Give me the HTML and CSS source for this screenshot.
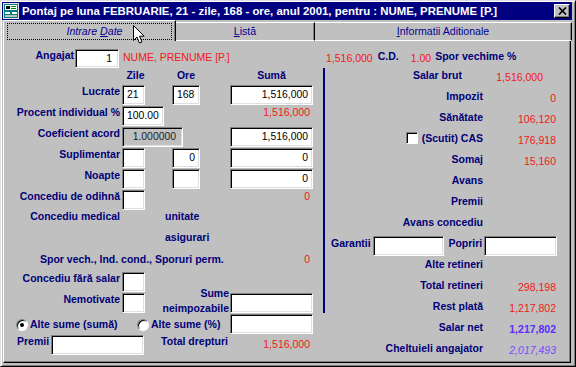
FILE: index.html
```html
<!DOCTYPE html>
<html>
<head>
<meta charset="utf-8">
<title>Pontaj</title>
<link rel="stylesheet" href="styles.css">
</head>
<body>
<div class="window">
  <div class="titlebar">
    <svg class="appicon" width="16" height="16" viewBox="0 0 16 16">
      <rect x="0.5" y="0.5" width="15" height="15" fill="#008080" stroke="#e0e0e0"/>
      <rect x="2" y="2" width="12" height="5" fill="#fff"/>
      <rect x="3" y="3" width="4" height="3" fill="#000"/>
      <rect x="8" y="3" width="5" height="1" fill="#008000"/>
      <rect x="8" y="5" width="5" height="1" fill="#008000"/>
      <rect x="2" y="9" width="5" height="2" fill="#fff"/>
      <rect x="9" y="9" width="5" height="2" fill="#fff"/>
      <rect x="2" y="12" width="12" height="2" fill="#c0c0c0"/>
    </svg>
    <span class="title">Pontaj pe luna FEBRUARIE, 21 - zile, 168 - ore, anul 2001, pentru : NUME, PRENUME [P.]</span>
    <span class="closebtn"><svg width="9" height="8" viewBox="0 0 9 8"><path d="M1 0.5 L8 7.5 M8 0.5 L1 7.5" stroke="#000" stroke-width="1.7"/></svg></span>
  </div>
  <div class="tabs">
    <div class="tab active"><span class="focus">Intrare&nbsp;<u>D</u>ate</span></div>
    <div class="tab t2"><u>L</u>istă</div>
    <div class="tab t3"><u>I</u>nformatii Aditionale</div>
    <svg class="cursor" width="13" height="20" viewBox="0 0 13 20">
      <path d="M0.5 0.5 L0.5 15.5 L4 12 L6.5 18 L9 17 L6.5 11.2 L11.2 11.2 Z" fill="#fff" stroke="#000" stroke-width="1"/>
    </svg>
  </div>
  <div class="panel">
    <div class="toprow">
      <span class="lb ang">Angajat</span>
      <span class="in r ang-in">1</span>
      <span class="red name">NUME, PRENUME [P.]</span>
      <span class="red cdv">1,516,000</span>
      <span class="lb cd">C.D.</span>
      <span class="red cdp">1.00</span>
      <span class="lb sporv">Spor vechime %</span>
    </div>
    <div class="cols">
      <div class="left">
        <span class="lb hdr c2 zile">Zile</span>
        <span class="lb hdr c4">Ore</span>
        <span class="lb hdr c6">Sumă</span>

        <span class="lb lab">Lucrate</span>
        <span class="in c2">21</span>
        <span class="in c4">168</span>
        <span class="in r c6">1,516,000</span>

        <span class="lb lab">Procent individual %</span>
        <span class="in c24">100.00</span>
        <span class="red val6">1,516,000</span>

        <span class="lb lab">Coeficient acord</span>
        <span class="in r dis c25">1.000000</span>
        <span class="in r c6">1,516,000</span>

        <span class="lb lab">Suplimentar</span>
        <span class="in c2"></span>
        <span class="in r c4">0</span>
        <span class="in r c6">0</span>

        <span class="lb lab">Noapte</span>
        <span class="in c2"></span>
        <span class="in c4"></span>
        <span class="in r c6">0</span>

        <span class="lb lab">Concediu de odihnă</span>
        <span class="in c2"></span>
        <span class="red val6">0</span>

        <span class="lb lab mid">Concediu medical</span>
        <span class="lb unit">unitate</span>

        <span class="lb unit">asigurari</span>

        <span class="lb sporl">Spor vech., Ind. cond., Sporuri perm.</span>
        <span class="red val6">0</span>

        <span class="lb lab">Concediu fără salar</span>
        <span class="in c2"></span>
        <span class="lb sume">Sume<br>neimpozabile</span>

        <span class="lb lab">Nemotivate</span>
        <span class="in c2"></span>
        <span class="in c6"></span>

        <span class="radios">
          <span class="rgroup"><span class="radio on"></span><span class="lb">Alte sume (sumă)</span></span>
          <span class="rgroup"><span class="radio"></span><span class="lb">Alte sume (%)</span></span>
        </span>
        <span class="in c6"></span>

        <span class="premii"><span class="lb">Premii</span><span class="in premii-in"></span></span>
        <span class="lb total">Total drepturi</span>
        <span class="red val6 totv">1,516,000</span>
      </div>
      <div class="divider"></div>
      <div class="right">
        <span class="lb rl brut">Salar brut</span>
        <span class="red rv brutv">1,516,000</span>

        <span class="lb rl">Impozit</span>
        <span class="red rv">0</span>

        <span class="lb rl">Sănătate</span>
        <span class="red rv">106,120</span>

        <span class="lb rl"><span class="chk"></span>(Scutit) CAS</span>
        <span class="red rv">176,918</span>

        <span class="lb rl">Somaj</span>
        <span class="red rv">15,160</span>

        <span class="lb rl">Avans</span>
        <span class="lb rl">Premii</span>
        <span class="lb rl">Avans concediu</span>

        <span class="garant">
          <span class="lb">Garantii</span><span class="in g-in"></span>
          <span class="lb pop">Popriri</span><span class="in p-in"></span>
        </span>

        <span class="lb rl">Alte retineri</span>

        <span class="lb rl">Total retineri</span>
        <span class="red rv">298,198</span>

        <span class="lb rl">Rest plată</span>
        <span class="red rv">1,217,802</span>

        <span class="lb rl">Salar net</span>
        <span class="rv net">1,217,802</span>

        <span class="lb rl">Cheltuieli angajator</span>
        <span class="rv chelt">2,017,493</span>
      </div>
    </div>
  </div>
</div>
</body>
</html>
```

FILE: styles.css
```css
html, body {
  margin: 0;
  padding: 0;
  background: #c0c0c0;
}
body {
  width: 576px;
  height: 367px;
  overflow: hidden;
  font-family: "Liberation Sans", Arial, sans-serif;
  font-size: 10.5px;
  line-height: 13px;
  color: #000;
}
.window {
  box-sizing: border-box;
  width: 576px;
  height: 367px;
  border: 1px solid;
  border-color: #dfdfdf #000 #000 #dfdfdf;
  box-shadow: inset 1px 1px #fff, inset -1px -1px #808080;
  padding: 1px 3px 3px 1px;
  display: flex;
  flex-direction: column;
  background: #c0c0c0;
}
.titlebar {
  flex: none;
  height: 18px;
  background: #000080;
  color: #fff;
  display: flex;
  align-items: center;
}
.appicon {
  flex: none;
  margin-left: 1px;
}
.title {
  margin-left: 3px;
  font-weight: bold;
  font-size: 11.4px;
  white-space: nowrap;
}
.closebtn {
  margin-left: auto;
  margin-right: 2px;
  box-sizing: border-box;
  width: 16px;
  height: 14px;
  background: #c0c0c0;
  border: 1px solid;
  border-color: #fff #000 #000 #fff;
  box-shadow: inset -1px -1px #808080;
  display: flex;
  align-items: center;
  justify-content: center;
}
.tabs {
  flex: none;
  position: relative;
  height: 21px;
  display: flex;
  padding-left: 1px;
}
.tab {
  box-sizing: border-box;
  display: flex;
  align-items: center;
  justify-content: center;
  color: #000090;
  font-size: 10.6px;
  background: #c0c0c0;
  white-space: nowrap;
}
.tab.active {
  width: 173px;
  height: 21px;
  border-top: 1px solid #fff;
  border-left: 1px solid #fff;
  border-right: 1px solid #000;
  border-top-left-radius: 2px;
  box-shadow: inset -1px 0 #808080;
  padding: 2px 3px 1px 3px;
}
.focus {
  flex: 1;
  align-self: stretch;
  border: 1px dotted #000;
  display: flex;
  align-items: center;
  justify-content: center;
  font-style: italic;
  padding-left: 10px;
}
.tab.t2, .tab.t3 {
  height: 19px;
  margin-top: 2px;
  border-top: 1px solid #fff;
  border-right: 1px solid #000;
  border-bottom: 1px solid #fff;
  box-shadow: inset -1px 0 #808080;
}
.tab.t2 {
  width: 139px;
}
.tab.t3 {
  flex: 1;
}
.cursor {
  position: absolute;
  left: 131px;
  top: 5px;
}
.panel {
  flex: 1;
  margin: 0 1px;
  border-left: 1px solid #fff;
  border-right: 1px solid #000;
  border-bottom: 1px solid #000;
  box-shadow: inset -1px -1px #808080;
  padding-top: 8px;
}

.lb {
  font-weight: bold;
  color: #000078;
  white-space: nowrap;
}
.red {
  color: #f01818;
  white-space: nowrap;
}
.in {
  box-sizing: border-box;
  height: 20px;
  background: #fff;
  border: 1px solid;
  border-color: #808080 #fff #fff #808080;
  box-shadow: inset 1px 1px #000, inset -1px -1px #dfdfdf;
  font-size: 10.4px;
  line-height: 18px;
  padding: 0 4px;
  white-space: nowrap;
  color: #000;
}
.in.r {
  text-align: right;
}
.in.dis {
  background: #c0c0c0;
  color: #202020;
  padding-right: 6px;
}

/* top row */
.toprow {
  display: flex;
  align-items: flex-start;
  height: 16px;
}
.ang {
  width: 70px;
  text-align: right;
}
.ang-in {
  width: 44px;
  height: 19px;
  margin-left: 1px;
  padding-right: 6px;
}
.name {
  margin-left: 4px;
  width: 203px;
  padding-top: 2px;
}
.cdv {
  padding-top: 3px;
}
.cd {
  margin-left: 5px;
  padding-top: 1px;
}
.cdp {
  margin-left: 12px;
  padding-top: 3px;
}
.sporv {
  margin-left: 4px;
  padding-top: 1px;
}

.cols {
  display: flex;
  align-items: flex-start;
}
.divider {
  flex: none;
  width: 2px;
  height: 245px;
  margin-top: 3px;
  background: #000080;
}

/* left column */
.left {
  flex: none;
  box-sizing: border-box;
  width: 319px;
  padding-top: 3px;
  display: grid;
  grid-template-columns: 118px 23px 27px 28px 30px 83px;
  grid-template-rows: 17px repeat(6, 21px) 11px 31px 19px repeat(4, 21px);
  align-items: start;
}
.lab {
  grid-column: 1;
  text-align: right;
  padding-right: 2px;
}
.c2 { grid-column: 2; }
.c4 { grid-column: 4; }
.c6 { grid-column: 6; }
.c24 {
  grid-column: 2 / 4;
  width: 42px;
}
.c25 {
  grid-column: 2 / 6;
  width: 61px;
}
.hdr {
  text-align: center;
  line-height: 14px;
}
.zile {
  padding-left: 4px;
}
.val6 {
  grid-column: 6;
  text-align: right;
  padding-right: 3px;
}
.mid {
  align-self: center;
}
.unit {
  grid-column: 2 / 7;
  padding-left: 43px;
  align-self: center;
}
.sporl {
  grid-column: 1 / 6;
  padding-left: 36px;
}
.sume {
  grid-column: 3 / 6;
  grid-row: span 2;
  align-self: end;
  text-align: right;
  line-height: 15px;
  margin-bottom: -2px;
  padding-right: 1px;
}
.radios {
  grid-column: 1 / 6;
  align-self: center;
  display: flex;
  align-items: center;
  padding-left: 12px;
}
.rgroup {
  display: flex;
  align-items: center;
  gap: 2px;
}
.rgroup:first-child {
  width: 121px;
}
.radio {
  position: relative;
  box-sizing: border-box;
  width: 12px;
  height: 12px;
  border-radius: 50%;
  background: #fff;
  border: 1px solid;
  border-color: #808080 #fff #fff #808080;
  box-shadow: inset 1px 1px #000;
}
.radio.on::after {
  content: "";
  position: absolute;
  left: 3px;
  top: 3px;
  width: 4px;
  height: 4px;
  border-radius: 50%;
  background: #000;
}
.premii {
  grid-column: 1 / 3;
  display: flex;
  align-items: flex-start;
  padding-left: 13px;
}
.premii-in {
  width: 93px;
  margin-left: 2px;
}
.total {
  grid-column: 3 / 6;
  text-align: right;
  padding-right: 2px;
}
.totv {
  padding-top: 3px;
}

/* right column */
.right {
  flex: none;
  width: 245px;
  display: grid;
  grid-template-columns: 158px 74px;
  grid-template-rows: repeat(14, 21px);
  align-items: center;
}
.rl {
  grid-column: 1;
  text-align: right;
}
.rv {
  grid-column: 2;
  text-align: right;
  padding-right: 1px;
  padding-top: 4px;
}
.brut {
  padding-right: 21px;
}
.brutv {
  padding-right: 14px;
}
.chk {
  display: inline-block;
  box-sizing: border-box;
  width: 12px;
  height: 12px;
  vertical-align: -2px;
  margin-right: 4px;
  background: #fff;
  border: 1px solid;
  border-color: #808080 #fff #fff #808080;
  box-shadow: inset 1px 1px #000;
}
.garant {
  grid-column: 1 / 3;
  align-self: start;
  display: flex;
  align-items: flex-start;
  padding-left: 6px;
}
.garant .lb {
  margin-top: 4px;
}
.g-in {
  width: 73px;
  margin-left: 2px;
  margin-top: 3px;
}
.pop {
  margin-left: 4px;
}
.p-in {
  width: 74px;
  margin-left: 2px;
  margin-top: 3px;
}
.net {
  color: #5a2cff;
  font-weight: bold;
}
.chelt {
  color: #7a4cff;
  font-style: italic;
}
```
